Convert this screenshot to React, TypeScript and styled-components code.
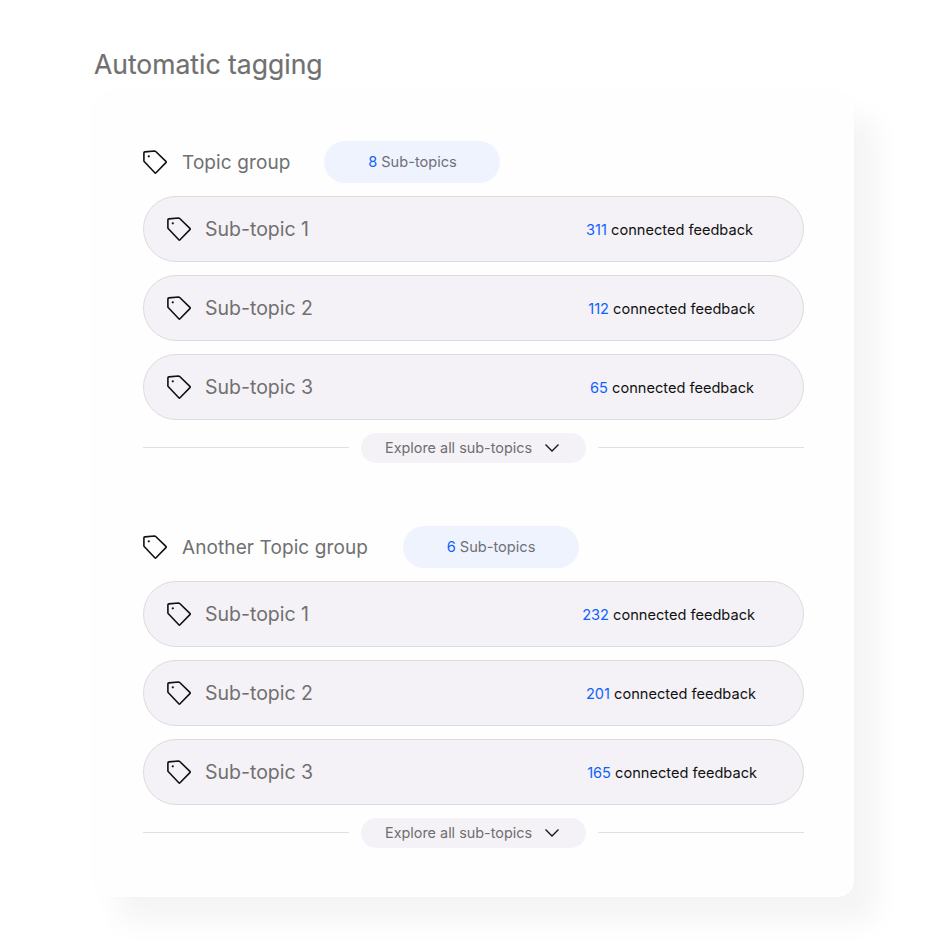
import React from 'react';
import styled, { createGlobalStyle } from 'styled-components';

const GlobalStyle = createGlobalStyle`
  html, body {
    margin: 0;
    padding: 0;
    background: #fff;
    font-family: Inter, "Liberation Sans", sans-serif;
  }
`;

function TagIcon() {
  return (
    <svg width="24" height="24" viewBox="0 0 24 24" fill="none">
      <path
        d="M0.9 3 Q0.9 2 1.9 1.9 L11.4 1 Q12.2 1 12.7 1.5 L22.9 11.3 Q23.5 12 22.9 12.6 L13 22.8 Q12.4 23.4 11.8 22.8 L1.4 11.8 Q0.9 11.3 0.9 10.7 Z"
        stroke="#111"
        strokeWidth="1.6"
        strokeLinejoin="round"
      />
      <circle cx="5.8" cy="6.3" r="1.1" fill="#111" />
    </svg>
  );
}

const Page = styled.div`
  width: 947px;
  height: 946px;
  box-sizing: border-box;
  padding: 45px 0 0 93px;
  overflow: hidden;
`;

const Title = styled.h1`
  margin: 0 0 9px 1px;
  font-size: 26.5px;
  line-height: 38px;
  font-weight: 400;
  color: #707070;
  -webkit-text-stroke: 0.2px #707070;
`;

const Card = styled.div`
  width: 761px;
  height: 805px;
  box-sizing: border-box;
  padding: 49px 50px 0;
  background: #fefefe;
  border-radius: 16px;
  box-shadow: 0 0 4px rgba(0, 0, 0, 0.015), 24px 26px 28px rgba(0, 0, 0, 0.045);
  display: flex;
  flex-direction: column;
  gap: 63px;
`;

const Group = styled.section`
  display: flex;
  flex-direction: column;
`;

const GroupHeader = styled.div`
  display: flex;
  align-items: center;
  height: 42px;
  margin-bottom: 13px;
`;

const GroupName = styled.span`
  margin-left: 15px;
  font-size: 19px;
  letter-spacing: 0.1px;
  color: #707070;
`;

const CountPill = styled.div<{ $offset: number }>`
  margin-left: ${({ $offset }) => $offset}px;
  width: 176px;
  height: 42px;
  border-radius: 21px;
  background: #eff3fd;
  display: flex;
  align-items: center;
  justify-content: center;
  font-size: 14.6px;
  color: #6f6f78;
`;

const Number = styled.span`
  color: #0f62fe;
`;

const Rows = styled.div`
  display: flex;
  flex-direction: column;
  gap: 13px;
`;

const Row = styled.div<{ $inset: number }>`
  height: 66px;
  box-sizing: border-box;
  padding: 0 ${({ $inset }) => $inset}px 0 23px;
  border: 1px solid #dedbdf;
  border-radius: 33px;
  background: #f4f2f6;
  display: flex;
  align-items: center;
`;

const RowName = styled.span`
  margin-left: 14px;
  font-size: 19.5px;
  color: #707070;
`;

const Feedback = styled.span`
  margin: 2px 0 0 auto;
  font-size: 14.6px;
  color: #111;
`;

const Footer = styled.div`
  margin-top: 13px;
  display: flex;
  align-items: center;
  gap: 12px;
`;

const Rule = styled.div`
  flex: 1;
  height: 1px;
  margin-bottom: 2px;
  background: #e0dfe1;
`;

const ExploreButton = styled.button`
  width: 225px;
  height: 30px;
  padding: 0 0 1px 24px;
  border: none;
  border-radius: 15px;
  background: #f4f2f6;
  display: flex;
  align-items: center;
  gap: 12px;
  font-family: inherit;
  font-size: 14.4px;
  color: #6f6f6f;
`;

type SubTopic = { name: string; count: number; inset: number };

const groups: { name: string; total: number; offset: number; subs: SubTopic[] }[] = [
  {
    name: 'Topic group',
    total: 8,
    offset: 34,
    subs: [
      { name: 'Sub-topic 1', count: 311, inset: 50 },
      { name: 'Sub-topic 2', count: 112, inset: 48 },
      { name: 'Sub-topic 3', count: 65, inset: 49 },
    ],
  },
  {
    name: 'Another Topic group',
    total: 6,
    offset: 35,
    subs: [
      { name: 'Sub-topic 1', count: 232, inset: 48 },
      { name: 'Sub-topic 2', count: 201, inset: 47 },
      { name: 'Sub-topic 3', count: 165, inset: 46 },
    ],
  },
];

export default function App() {
  return (
    <Page>
      <GlobalStyle />
      <Title>Automatic tagging</Title>
      <Card>
        {groups.map((group) => (
          <Group key={group.name}>
            <GroupHeader>
              <TagIcon />
              <GroupName>{group.name}</GroupName>
              <CountPill $offset={group.offset}>
                <Number>{group.total}</Number>&nbsp;Sub-topics
              </CountPill>
            </GroupHeader>
            <Rows>
              {group.subs.map((sub) => (
                <Row key={sub.name} $inset={sub.inset}>
                  <TagIcon />
                  <RowName>{sub.name}</RowName>
                  <Feedback>
                    <Number>{sub.count}</Number> connected feedback
                  </Feedback>
                </Row>
              ))}
            </Rows>
            <Footer>
              <Rule />
              <ExploreButton>
                Explore all sub-topics
                <svg width="16" height="16" viewBox="0 0 16 16" fill="none">
                  <path d="M1.5 4.5 L8 11 L14.5 4.5" stroke="#111" strokeWidth="1.3" />
                </svg>
              </ExploreButton>
              <Rule />
            </Footer>
          </Group>
        ))}
      </Card>
    </Page>
  );
}
